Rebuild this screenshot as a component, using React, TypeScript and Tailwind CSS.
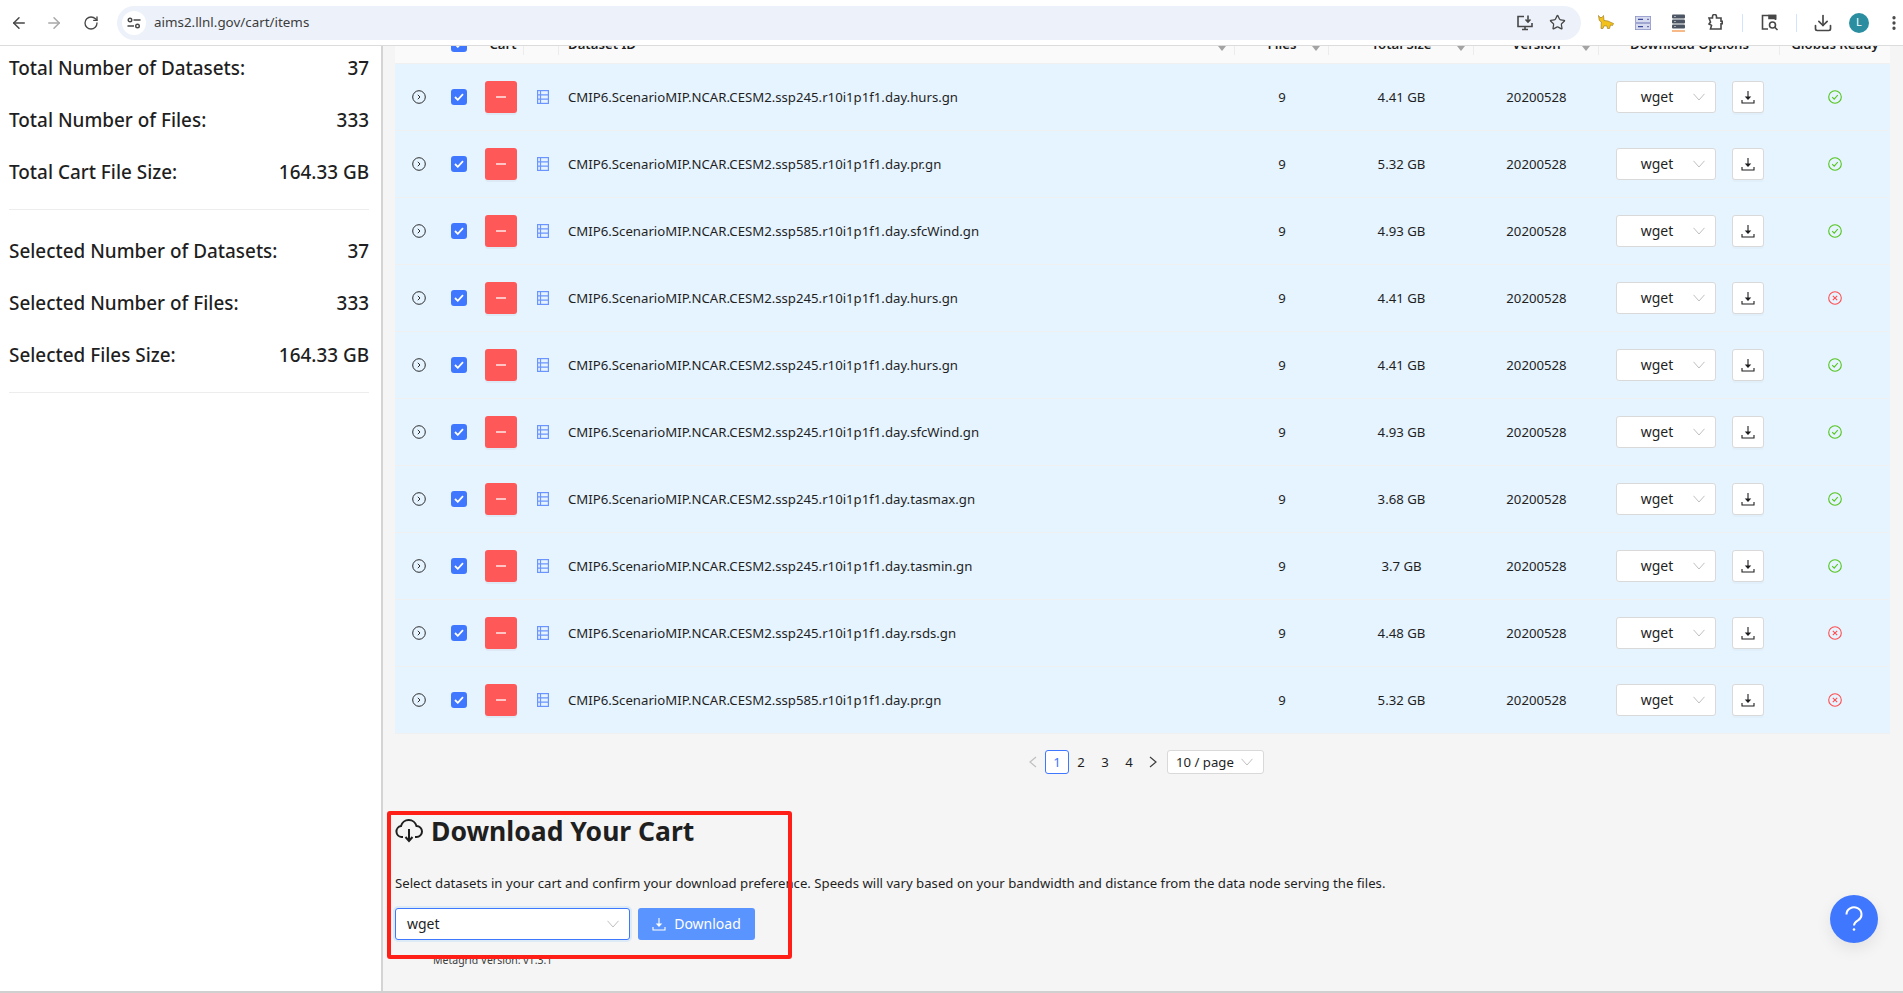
import { ArrowLeft, ArrowRight, RotateCw, Star, Download, MoreVertical } from 'lucide-react'

const rows = [
  { id: 'CMIP6.ScenarioMIP.NCAR.CESM2.ssp245.r10i1p1f1.day.hurs.gn', size: '4.41 GB', ok: true },
  { id: 'CMIP6.ScenarioMIP.NCAR.CESM2.ssp585.r10i1p1f1.day.pr.gn', size: '5.32 GB', ok: true },
  { id: 'CMIP6.ScenarioMIP.NCAR.CESM2.ssp585.r10i1p1f1.day.sfcWind.gn', size: '4.93 GB', ok: true },
  { id: 'CMIP6.ScenarioMIP.NCAR.CESM2.ssp245.r10i1p1f1.day.hurs.gn', size: '4.41 GB', ok: false },
  { id: 'CMIP6.ScenarioMIP.NCAR.CESM2.ssp245.r10i1p1f1.day.hurs.gn', size: '4.41 GB', ok: true },
  { id: 'CMIP6.ScenarioMIP.NCAR.CESM2.ssp245.r10i1p1f1.day.sfcWind.gn', size: '4.93 GB', ok: true },
  { id: 'CMIP6.ScenarioMIP.NCAR.CESM2.ssp245.r10i1p1f1.day.tasmax.gn', size: '3.68 GB', ok: true },
  { id: 'CMIP6.ScenarioMIP.NCAR.CESM2.ssp245.r10i1p1f1.day.tasmin.gn', size: '3.7 GB', ok: true },
  { id: 'CMIP6.ScenarioMIP.NCAR.CESM2.ssp245.r10i1p1f1.day.rsds.gn', size: '4.48 GB', ok: false },
  { id: 'CMIP6.ScenarioMIP.NCAR.CESM2.ssp585.r10i1p1f1.day.pr.gn', size: '5.32 GB', ok: false },
]

const cols = 'grid grid-cols-[49px_30px_50px_35px_676px_94px_145px_125px_181px_110px]'

function CheckBox() {
  return (
    <span className="flex h-4 w-4 items-center justify-center rounded-[3px] bg-[#4077ff]">
      <svg width="10" height="8" viewBox="0 0 10 8" fill="none" stroke="#fff" strokeWidth="1.8">
        <path d="M1 4l2.8 2.8L9 1.2" />
      </svg>
    </span>
  )
}

function DownloadTray({ color = '#1f1f1f', size = 14 }: { color?: string; size?: number }) {
  return (
    <svg width={size} height={size} viewBox="0 0 14 14" fill="none" stroke={color} strokeWidth="1.1">
      <path d="M7 1v7.5M1 10v3h12v-3" />
      <path d="M5 7h4L7 9.2z" fill={color} />
    </svg>
  )
}

function SelectArrow({ className }: { className: string }) {
  return (
    <svg className={className} width="12" height="8" viewBox="0 0 12 8" fill="none" stroke="#bfbfbf" strokeWidth="1">
      <path d="M0.5 0.8L6 7l5.5-6.2" />
    </svg>
  )
}

function PageArrow({ left, color }: { left?: boolean; color: string }) {
  return (
    <span className="flex h-6 w-6 items-center justify-center">
      <svg width="8" height="12" viewBox="0 0 8 12" fill="none" stroke={color} strokeWidth="1.2">
        <path d={left ? 'M7 1L1 6l6 5' : 'M1 1l6 5-6 5'} />
      </svg>
    </span>
  )
}

function HeaderCell({ label, sort, divider = true, left, shift }: { label?: string; sort?: boolean; divider?: boolean; left?: boolean; shift?: boolean }) {
  return (
    <div className={`relative -mt-[30px] flex h-[47px] items-center ${left ? 'justify-start pl-[9px]' : 'justify-center'} ${shift ? 'pl-[8px]' : ''}`}>
      <span className="relative top-[5px] font-semibold">{label}</span>
      {sort && <span className="absolute right-[9px] top-[30px] h-0 w-0 border-x-[4px] border-t-[5px] border-x-transparent border-t-[#a3a3a3]" />}
      {divider && <span className="absolute right-0 top-[20px] h-[19px] w-px bg-[#ececec]" />}
    </div>
  )
}

function Row({ id, size, ok }: { id: string; size: string; ok: boolean }) {
  return (
    <div className={`${cols} h-[67px] items-center border-b border-[#f0f0f0] bg-[#e6f4ff] text-[#1f1f1f]`}>
      <div className="flex justify-center pr-[1px]">
        <svg width="14" height="14" viewBox="0 0 14 14" fill="none" stroke="#2b2b2b" strokeWidth="1">
          <circle cx="7" cy="7" r="6.3" />
          <path d="M5.8 4.8L8 7l-2.2 2.2" />
        </svg>
      </div>
      <div className="flex justify-center"><CheckBox /></div>
      <div className="flex justify-center pl-[4px]">
        <span className="flex h-8 w-8 items-center justify-center rounded-[3px] bg-[#ff5858] shadow-[0_2px_0_rgba(0,0,0,0.04)]">
          <span className="h-[1.5px] w-[10px] bg-[#ffc4c4]" />
        </span>
      </div>
      <div className="flex justify-center pl-[3px]">
        <svg width="12" height="14" viewBox="0 0 12 14" fill="none" stroke="#6b94ff" strokeWidth="1.2">
          <rect x="0.6" y="0.6" width="10.8" height="12.8" />
          <path d="M0.6 4.8h10.8M0.6 9.2h10.8M3.5 0.6v12.8" />
        </svg>
      </div>
      <div className="pl-[9px] pt-[1px]">{id}</div>
      <div className="pt-[1px] text-center">9</div>
      <div className="pt-[1px] text-center">{size}</div>
      <div className="pt-[1px] text-center">20200528</div>
      <div className="flex items-center pl-[17px]">
        <span className="relative flex h-8 w-[100px] items-center justify-center rounded-[3px] border border-[#d9d9d9] bg-white pb-[1px] pr-[18px] text-[14px]">
          wget
          <SelectArrow className="absolute right-[10px] top-[11px]" />
        </span>
        <span className="ml-[16px] flex h-8 w-8 items-center justify-center rounded-[3px] border border-[#d9d9d9] bg-white shadow-[0_2px_0_rgba(0,0,0,0.02)]">
          <DownloadTray />
        </span>
      </div>
      <div className="flex justify-center">
        {ok ? (
          <svg width="14" height="14" viewBox="0 0 14 14" fill="none" stroke="#52c41a" strokeWidth="1.1">
            <circle cx="7" cy="7" r="6.3" />
            <path d="M4.2 7.2L6.2 9.2 9.8 5" />
          </svg>
        ) : (
          <svg width="14" height="14" viewBox="0 0 14 14" fill="none" stroke="#ff4d4f" strokeWidth="1.1">
            <circle cx="7" cy="7" r="6.3" />
            <path d="M4.8 4.8l4.4 4.4M9.2 4.8L4.8 9.2" />
          </svg>
        )}
      </div>
    </div>
  )
}

function Stat({ label, value }: { label: string; value: string }) {
  return (
    <div className="flex h-[52px] items-center justify-between text-[18.9px] font-medium text-[#1f1f1f]">
      <span>{label}</span>
      <span>{value}</span>
    </div>
  )
}

function BrowserBar() {
  return (
    <div className="flex h-[46px] shrink-0 items-center border-b border-[#dcdcdc] bg-white text-[#474747]">
      <div className="flex w-[117px] shrink-0 items-center pl-[10px]">
        <ArrowLeft size={18} strokeWidth={2} />
        <ArrowRight size={18} strokeWidth={2} className="ml-[17px] text-[#a8a8a8]" />
        <RotateCw size={16} strokeWidth={2} className="ml-[20px]" />
      </div>
      <div className="flex h-[34px] w-[1464px] shrink-0 items-center rounded-full bg-[#edf2fa] pl-[5px] pr-[15px]">
        <span className="flex h-6 w-6 items-center justify-center rounded-full bg-white">
          <svg width="14" height="12" viewBox="0 0 14 12" fill="none" stroke="#474747" strokeWidth="1.4">
            <circle cx="3" cy="3" r="1.8" />
            <path d="M6.5 3H13.5M0.5 9H7" />
            <circle cx="10.5" cy="9" r="1.8" />
          </svg>
        </span>
        <span className="ml-[8px] text-[13.4px] text-[#3c3c3c]">aims2.llnl.gov/cart/items</span>
        <svg className="ml-auto" width="18" height="18" viewBox="0 0 18 18" fill="none" stroke="#474747" strokeWidth="1.6">
          <path d="M8 2.5H2v10h14V9M6 15.5h6M9 12.5v3M12 1.5v6M9.5 5.5L12 8l2.5-2.5" />
        </svg>
        <Star size={17} strokeWidth={1.8} className="ml-[15px]" />
      </div>
      {/* extension icons */}
      <svg className="ml-[17px]" width="17" height="15" viewBox="0 0 17 15">
        <path d="M0.5 0.5l1.5 2 2 0 1.5-2 0.5 5 4 0.5 3 1.5 2.5 1-1 2-2-0.5-1 3.5h-2l-0.5-2.5-3-0.2-1 2.7h-2l0.3-6.5-2-1.5z" fill="#f2c21b" stroke="#a8801a" strokeWidth="0.7" />
      </svg>
      <svg className="ml-[20px]" width="16" height="14" viewBox="0 0 16 14">
        <rect x="0.4" y="0.4" width="15.2" height="6" fill="#d7dbf0" stroke="#8d94c7" strokeWidth="0.8" />
        <rect x="0.4" y="7.6" width="15.2" height="6" fill="#d7dbf0" stroke="#8d94c7" strokeWidth="0.8" />
        <path d="M3 3.4h5M3 10.6h5" stroke="#3d4a9a" strokeWidth="1.2" />
        <path d="M12 3.4h2M12 10.6h2" stroke="#6d75b5" strokeWidth="1.2" />
      </svg>
      <svg className="ml-[21px]" width="13" height="18" viewBox="0 0 13 18">
        <rect x="0" y="0.5" width="13" height="4" rx="1" fill="#4b5563" />
        <rect x="0" y="5.5" width="13" height="4" rx="1" fill="#4b5563" />
        <rect x="0" y="10.5" width="13" height="4" rx="1" fill="#4b5563" />
        <path d="M2.5 2.5h1M2.5 7.5h1M2.5 12.5h1" stroke="#fff" strokeWidth="1.2" />
        <path d="M0 17h13" stroke="#f4a261" strokeWidth="1.5" />
      </svg>
      <svg className="ml-[22px]" width="17" height="17" viewBox="0 0 17 17" fill="none" stroke="#474747" strokeWidth="1.6">
        <path d="M2 4h3.5V2.5a1.5 1.5 0 0 1 4 0V4H14v3.2h1.2v2.6H14V15H3.5l1-3.6L2 10l1.5-2z" />
      </svg>
      <span className="ml-[18px] h-[18px] w-px bg-[#d3e3fd]" />
      <svg className="ml-[18px]" width="18" height="17" viewBox="0 0 18 17" fill="none" stroke="#474747" strokeWidth="1.6">
        <path d="M7 15H1.5V1.5h13V6" />
        <path d="M8 1.5h6.5v3H8z" fill="#474747" />
        <circle cx="11.5" cy="11" r="3" />
        <path d="M13.8 13.3l2.7 2.7" />
      </svg>
      <span className="ml-[17px] h-[18px] w-px bg-[#d3e3fd]" />
      <Download size={20} strokeWidth={2} className="ml-[16px]" />
      <span className="ml-[16px] flex h-5 w-5 items-center justify-center rounded-full bg-[#2a8ea0] text-[11px] text-white">L</span>
      <MoreVertical size={18} strokeWidth={2.4} className="ml-[16px]" />
    </div>
  )
}

export default function App() {
  return (
    <div className="relative flex h-[993px] w-[1903px] flex-col overflow-hidden bg-[#f5f5f5] font-['Noto_Sans','Open_Sans',sans-serif] text-[13.2px] text-[#1f1f1f]">
      <BrowserBar />
      <div className="flex min-h-0 flex-1 border-b-2 border-[#d0d0d0]">
        {/* sidebar */}
        <aside className="w-[383px] shrink-0 border-r-2 border-[#d4d4d4] bg-white pl-[9px] pr-[12px]">
          <div className="-mt-[4px]">
            <Stat label="Total Number of Datasets:" value="37" />
            <Stat label="Total Number of Files:" value="333" />
            <Stat label="Total Cart File Size:" value="164.33 GB" />
            <div className="mb-[15px] mt-[11px] border-t border-[#ededed]" />
            <Stat label="Selected Number of Datasets:" value="37" />
            <Stat label="Selected Number of Files:" value="333" />
            <Stat label="Selected Files Size:" value="164.33 GB" />
            <div className="mt-[11px] border-t border-[#ededed]" />
          </div>
        </aside>

        <main className="min-w-0 flex-1 pl-[12px]">
          <div className="w-[1495px]">
            {/* header is scrolled mostly out of view under the browser bar */}
            <div className={`${cols} h-[18px] overflow-hidden border-b border-[#f0f0f0] bg-[#fafafa]`}>
              <div />
              <div className="-mt-[30px] flex h-[47px] items-start justify-center pt-[20px]"><CheckBox /></div>
              <HeaderCell label="Cart" shift />
              <HeaderCell />
              <HeaderCell label="Dataset ID" sort left />
              <HeaderCell label="Files" sort />
              <HeaderCell label="Total Size" sort />
              <HeaderCell label="Version" sort />
              <HeaderCell label="Download Options" />
              <HeaderCell label="Globus Ready" divider={false} />
            </div>
            {rows.map((r, i) => (
              <Row key={i} {...r} />
            ))}

            <div className="mt-[16px] flex h-6 items-center justify-center">
              <PageArrow left color="#bfbfbf" />
              <span className="flex h-6 w-6 items-center justify-center rounded-[3px] border border-[#4077ff] bg-white pt-[1px] text-[#4077ff]">1</span>
              <span className="flex h-6 w-6 items-center justify-center pt-[1px]">2</span>
              <span className="flex h-6 w-6 items-center justify-center pt-[1px]">3</span>
              <span className="flex h-6 w-6 items-center justify-center pt-[1px]">4</span>
              <PageArrow color="#3d3d3d" />
              <span className="relative ml-[2px] flex h-6 w-[97px] items-center rounded-[3px] border border-[#d9d9d9] bg-white pl-[8px] pt-[1px]">
                10 / page
                <SelectArrow className="absolute right-[10px] top-[7px]" />
              </span>
            </div>

            <h3 className="mt-[38px] flex h-[38px] items-center text-[26.5px] font-bold leading-none">
              <svg className="mr-[8px]" width="28" height="24" viewBox="0 0 28 24" fill="none" stroke="#1f1f1f" strokeWidth="2">
                <path d="M8 18H6.5A5.5 5.5 0 0 1 6 7.1 8 8 0 0 1 21.5 7 5.5 5.5 0 0 1 21.5 18H20" />
                <path d="M14 10v11M10.5 18l3.5 4 3.5-4" />
              </svg>
              Download Your Cart
            </h3>
            <p className="mt-[22px] leading-[22px]">
              Select datasets in your cart and confirm your download preference. Speeds will vary based on your bandwidth and distance from the data node serving the files.
            </p>
            <div className="mt-[14px] flex gap-[8px]">
              <span className="relative flex h-8 w-[235px] items-center rounded-[3px] border border-[#4077ff] bg-white pb-[1px] pl-[11px] text-[14px] shadow-[0_0_0_2px_rgba(5,145,255,0.1)]">
                wget
                <SelectArrow className="absolute right-[10px] top-[11px]" />
              </span>
              <span className="flex h-8 w-[117px] items-center justify-center gap-[8px] rounded-[3px] bg-[#5a94ff] pb-[1px] text-[14px] text-white">
                <DownloadTray color="#fff" />
                Download
              </span>
            </div>
            <p className="ml-[38px] mt-[12px] text-[10.5px] leading-[16px] text-[#3d3d3d]">Metagrid Version: v1.3.1</p>
          </div>
        </main>
      </div>

      {/* red annotation drawn over the screenshot */}
      <div className="absolute left-[387px] top-[811px] h-[148px] w-[405px] rounded-[3px] border-[4px] border-[#ff1f17]" />

      {/* help button */}
      <span className="absolute left-[1830px] top-[895px] flex h-12 w-12 items-center justify-center rounded-full bg-[#4077ff] shadow-[0_6px_16px_rgba(0,0,0,0.08)]">
        <svg width="20" height="26" viewBox="0 0 20 26" fill="none" stroke="#fff" strokeWidth="2">
          <path d="M2.5 8.5A7.5 7 0 1 1 14 14.3C11.5 15.8 10 16.5 10 19.5" />
          <circle cx="10" cy="23.5" r="1.3" fill="#fff" stroke="none" />
        </svg>
      </span>
    </div>
  )
}
